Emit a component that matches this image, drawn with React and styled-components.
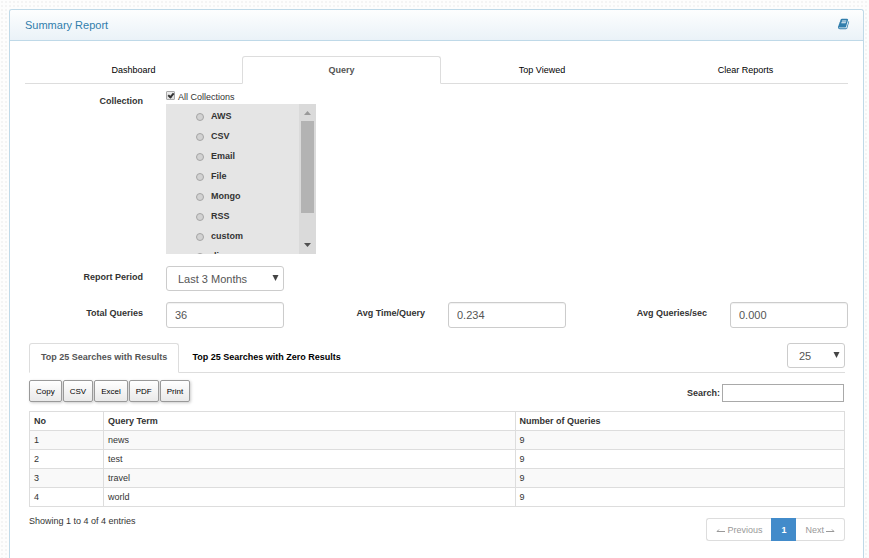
import { useState } from "react";
import styled, { createGlobalStyle } from "styled-components";

const GlobalStyle = createGlobalStyle`
  * {
    box-sizing: border-box;
  }
  body {
    margin: 0;
    font-family: "Liberation Sans", Arial, sans-serif;
    font-size: 9px;
    line-height: 12px;
    color: #333;
    background-color: #fdfdfd;
    background-image: radial-gradient(#f4f4f4 1px, transparent 1px);
    background-size: 4px 4px;
  }
  button, input, select {
    font-family: inherit;
  }
`;

const Page = styled.div`
  padding: 9px 5px 0 9px;
`;

const Panel = styled.section`
  min-height: calc(100vh - 9px);
  background: #fff;
  border: 1px solid #bfd9e8;
  border-bottom: none;
  border-radius: 3px 3px 0 0;
`;

const PanelHeader = styled.header`
  display: flex;
  justify-content: space-between;
  align-items: center;
  height: 31px;
  padding: 0 13px 0 15px;
  border-bottom: 1px solid #bfd9e8;
  border-radius: 3px 3px 0 0;
  background: linear-gradient(#fdfefe, #eaf2f8);
`;

const PanelTitle = styled.h1`
  margin: 0;
  font-size: 11px;
  font-weight: normal;
  color: #317eac;
`;

const HelpLink = styled.a`
  display: flex;
  padding-bottom: 2px;
  color: #317eac;
`;

const PanelBody = styled.div`
  padding: 15px;
`;

const Tabs = styled.div`
  display: flex;
  border-bottom: 1px solid #ddd;
`;

const Tab = styled.button`
  flex: ${({ $grow }) => $grow} 1 0;
  height: 28px;
  margin-bottom: -1px;
  padding: 0;
  border: 1px solid ${({ $active }) => ($active ? "#ddd" : "transparent")};
  border-bottom-color: ${({ $active }) => ($active ? "#fff" : "#ddd")};
  border-radius: 3px 3px 0 0;
  background: ${({ $active }) => ($active ? "#fff" : "none")};
  color: ${({ $active }) => ($active ? "#555" : "#000")};
  font-size: 9px;
  font-weight: ${({ $active }) => ($active ? "bold" : "normal")};
  cursor: pointer;
`;

const FormGrid = styled.div`
  display: grid;
  grid-template-columns: repeat(6, 1fr);
  column-gap: 23px;
  row-gap: 11px;
  padding-top: 6px;
`;

const Label = styled.label`
  grid-column-start: ${({ $first }) => ($first ? 1 : "auto")};
  padding-top: 5px;
  text-align: right;
  font-weight: bold;
`;

const CollectionCell = styled.div`
  grid-column: 2 / -1;
`;

const CheckLabel = styled.label`
  display: flex;
  align-items: center;
  gap: 3px;
  height: 14px;
  padding-bottom: 1px;
`;

const Check = styled.input`
  appearance: none;
  display: flex;
  justify-content: center;
  width: 9px;
  height: 9px;
  margin: 0 0 2px;
  border: 1px solid #aaa;
  border-radius: 1px;
  background: linear-gradient(#eee, #ddd);

  &:checked::after {
    content: "";
    box-sizing: border-box;
    width: 4px;
    height: 6px;
    border: solid #333;
    border-width: 0 2px 2px 0;
    transform: rotate(40deg);
  }
`;

const CollectionBox = styled.div`
  display: flex;
  width: 150px;
  height: 150px;
  margin-bottom: 1px;
  background: #e5e5e5;
`;

const CollectionList = styled.ul`
  flex: 1;
  margin: 0;
  padding: 2px 0 0 30px;
  list-style: none;
  overflow-y: auto;
  scrollbar-width: none;
`;

const CollectionItem = styled.label`
  display: flex;
  align-items: center;
  gap: 7px;
  height: 20px;
  font-weight: bold;
`;

const Radio = styled.input`
  appearance: none;
  width: 8px;
  height: 8px;
  margin: 2px 0 0;
  border: 1px solid #a5a5a5;
  border-radius: 50%;
  background: #d2d2d2;
`;

const ScrollTrack = styled.div`
  display: flex;
  flex-direction: column;
  align-items: center;
  width: 17px;
  background: #dadada;
`;

const ScrollArrow = styled.svg`
  width: 17px;
  height: 17px;
  flex: none;
`;

const ScrollThumb = styled.div`
  width: 13px;
  height: 92px;
  margin-bottom: auto;
  background: #b3b3b3;
`;

const SelectWrap = styled.div`
  position: relative;
  width: ${({ $width }) => $width || "100%"};
`;

const Select = styled.select`
  appearance: none;
  display: block;
  width: 100%;
  height: 25px;
  padding: 0 11px;
  border: 1px solid #ccc;
  border-radius: 3px;
  background: #fff;
  color: #555;
  font-size: 11px;
`;

const SelectArrow = styled.svg`
  position: absolute;
  top: 9px;
  right: 5px;
  pointer-events: none;
`;

const TextBox = styled.input`
  width: 100%;
  min-width: 0;
  height: 26px;
  padding: 0 8px;
  border: 1px solid #ccc;
  border-radius: 3px;
  box-shadow: inset 0 1px 1px rgba(0, 0, 0, 0.06);
  background: #fff;
  color: #555;
  font-size: 11px;
`;

const Results = styled.div`
  padding: 15px 3px 0 4px;
`;

const ResultTabs = styled.div`
  display: flex;
  border-bottom: 1px solid #ddd;
`;

const ResultTab = styled.button`
  height: 30px;
  margin: 0 1px -1px 0;
  padding: 0 11px 2px;
  border: 1px solid ${({ $active }) => ($active ? "#ddd" : "transparent")};
  border-bottom-color: ${({ $active }) => ($active ? "#fff" : "#ddd")};
  border-radius: 3px 3px 0 0;
  background: ${({ $active }) => ($active ? "#fff" : "none")};
  color: ${({ $active }) => ($active ? "#555" : "#000")};
  font-size: 9px;
  font-weight: bold;
  cursor: pointer;
`;

const PageSize = styled.div`
  margin-left: auto;
`;

const Toolbar = styled.div`
  display: flex;
  justify-content: space-between;
  align-items: flex-end;
  height: 29px;
`;

const Buttons = styled.div`
  display: flex;
  gap: 1px;
`;

const ExportButton = styled.button`
  height: 22px;
  padding: 0 6px;
  border: 1px solid #999;
  border-radius: 2px;
  background: linear-gradient(#fff, #e9e9e9);
  box-shadow: 1px 1px 3px #ccc;
  color: #000;
  font-size: 8px;
`;

const SearchLabel = styled.label`
  display: flex;
  align-items: center;
  gap: 2px;
  font-weight: bold;
`;

const SearchBox = styled.input`
  width: 122px;
  height: 18px;
  margin-right: 1px;
  border: 1px solid #a9a9a9;
  background: #fff;
`;

const Table = styled.table`
  width: 100%;
  margin-top: 9px;
  table-layout: fixed;
  border-collapse: collapse;

  th,
  td {
    height: 19px;
    padding: 0 4px;
    border: 1px solid #ddd;
    text-align: left;
  }
  th:nth-child(1) {
    width: 74px;
  }
  th:nth-child(2) {
    width: 50.5%;
  }
  tbody tr:nth-child(odd) {
    background: #f9f9f9;
  }
`;

const TableFooter = styled.div`
  display: flex;
  justify-content: space-between;
  padding-top: 8px;
`;

const Pagination = styled.nav`
  display: flex;
  margin-top: 3px;
`;

const PageLink = styled.a`
  display: flex;
  align-items: center;
  gap: 2px;
  height: 23px;
  padding: 0 9px;
  border: 1px solid ${({ $active }) => ($active ? "#428bca" : "#ddd")};
  background: ${({ $active }) => ($active ? "#428bca" : "#fff")};
  color: ${({ $active }) => ($active ? "#fff" : "#999")};
  font-weight: ${({ $active }) => ($active ? "bold" : "normal")};
  text-decoration: none;

  &:first-child {
    border-right: none;
    border-radius: 3px 0 0 3px;
  }
  &:last-child {
    border-left: none;
    border-radius: 0 3px 3px 0;
  }
`;

const tabs = [
  { name: "Dashboard", grow: 217 },
  { name: "Query", grow: 199 },
  { name: "Top Viewed", grow: 202 },
  { name: "Clear Reports", grow: 205 },
];

const resultTabs = ["Top 25 Searches with Results", "Top 25 Searches with Zero Results"];

const collections = ["AWS", "CSV", "Email", "File", "Mongo", "RSS", "custom", "disc"];

const stats = [
  { id: "total", label: "Total Queries", value: "36" },
  { id: "time", label: "Avg Time/Query", value: "0.234" },
  { id: "rate", label: "Avg Queries/sec", value: "0.000" },
];

const rows = [
  { term: "news", count: 9 },
  { term: "test", count: 9 },
  { term: "travel", count: 9 },
  { term: "world", count: 9 },
];

const BookIcon = () => (
  <svg width="12" height="12" viewBox="0 0 1792 1792" fill="currentColor">
    <path d="M1639 478q40 57 18 129l-275 906q-19 64-76.5 107.5t-122.5 43.5h-923q-77 0-148.5-53.5t-99.5-131.5q-24-67-2-127 0-4 3-27t4-37q1-8-3-21.5t-3-19.5q2-11 8-21t16.5-23.5 16.5-23.5q23-38 45-91.5t30-91.5q3-10 .5-30t-.5-28q3-11 17-28t17-23q21-36 42-92t25-90q1-9-2.5-32t.5-28q4-13 22-30.5t22-22.5q19-26 42.5-84.5t27.5-96.5q1-8-3-25.5t-2-26.5q2-8 9-18t18-23 17-21q8-12 16.5-30.5t15-35 16-36 19.5-32 26.5-23.5 36-11.5 47.5 5.5l-1 3q38-9 51-9h761q74 0 114 56t18 130l-274 906q-36 119-71.5 153.5t-128.5 34.5h-869q-27 0-38 15-11 16-1 43 24 70 144 70h923q29 0 56-15.5t35-41.5l300-987q7-22 5-57 38 15 59 43zm-1064 2q-4 13 2 22.5t20 9.5h608q13 0 25.5-9.5t16.5-22.5l21-64q4-13-2-22.5t-20-9.5h-608q-13 0-25.5 9.5t-16.5 22.5zm-83 256q-4 13 2 22.5t20 9.5h608q13 0 25.5-9.5t16.5-22.5l21-64q4-13-2-22.5t-20-9.5h-608q-13 0-25.5 9.5t-16.5 22.5z" />
  </svg>
);

const DropDown = ({ width, options, ...rest }) => (
  <SelectWrap $width={width}>
    <Select {...rest}>
      {options.map((option) => (
        <option key={option}>{option}</option>
      ))}
    </Select>
    <SelectArrow width="7" height="6" viewBox="0 0 7 6">
      <path d="M0.500 0h6L3.500 6z" fill="#444" />
    </SelectArrow>
  </SelectWrap>
);

const App = () => {
  const [tab, setTab] = useState("Query");
  const [resultTab, setResultTab] = useState(resultTabs[0]);

  return (
    <Page>
      <GlobalStyle />
      <Panel>
        <PanelHeader>
          <PanelTitle>Summary Report</PanelTitle>
          <HelpLink href="#help" aria-label="Help">
            <BookIcon />
          </HelpLink>
        </PanelHeader>
        <PanelBody>
          <Tabs>
            {tabs.map(({ name, grow }) => (
              <Tab key={name} $grow={grow} $active={name === tab} onClick={() => setTab(name)}>
                {name}
              </Tab>
            ))}
          </Tabs>

          <FormGrid>
            <Label as="div" $first>Collection</Label>
            <CollectionCell>
              <CheckLabel>
                <Check type="checkbox" defaultChecked />
                All Collections
              </CheckLabel>
              <CollectionBox>
                <CollectionList>
                  {collections.map((name) => (
                    <li key={name}>
                      <CollectionItem>
                        <Radio type="radio" name="collection" disabled />
                        {name}
                      </CollectionItem>
                    </li>
                  ))}
                </CollectionList>
                <ScrollTrack>
                  <ScrollArrow viewBox="0 0 17 17">
                    <path d="M5 11h7L8.500 7z" fill="#999" />
                  </ScrollArrow>
                  <ScrollThumb />
                  <ScrollArrow viewBox="0 0 17 17">
                    <path d="M5 6h7l-3.500 4z" fill="#505050" />
                  </ScrollArrow>
                </ScrollTrack>
              </CollectionBox>
            </CollectionCell>

            <Label htmlFor="period" $first>Report Period</Label>
            <DropDown id="period" options={["Last 3 Months", "Last Month", "Last Week"]} />

            {stats.map(({ id, label, value }, i) => [
              <Label key={id + "-label"} htmlFor={id} $first={i === 0}>{label}</Label>,
              <TextBox key={id} id={id} defaultValue={value} />,
            ])}
          </FormGrid>

          <Results>
            <ResultTabs>
              {resultTabs.map((name) => (
                <ResultTab key={name} $active={name === resultTab} onClick={() => setResultTab(name)}>
                  {name}
                </ResultTab>
              ))}
              <PageSize>
                <DropDown width="58px" aria-label="Rows" options={["25", "50", "100"]} />
              </PageSize>
            </ResultTabs>

            <Toolbar>
              <Buttons>
                {["Copy", "CSV", "Excel", "PDF", "Print"].map((name) => (
                  <ExportButton key={name}>{name}</ExportButton>
                ))}
              </Buttons>
              <SearchLabel>
                Search:
                <SearchBox type="search" />
              </SearchLabel>
            </Toolbar>

            <Table>
              <thead>
                <tr>
                  <th>No</th>
                  <th>Query Term</th>
                  <th>Number of Queries</th>
                </tr>
              </thead>
              <tbody>
                {rows.map(({ term, count }, i) => (
                  <tr key={term}>
                    <td>{i + 1}</td>
                    <td>{term}</td>
                    <td>{count}</td>
                  </tr>
                ))}
              </tbody>
            </Table>

            <TableFooter>
              <span>Showing 1 to 4 of 4 entries</span>
              <Pagination>
                <PageLink href="#prev">
                  <svg width="9" height="8" viewBox="0 0 9 8" fill="none" stroke="currentColor">
                    <path d="M3 3.500L1 5.500h8" />
                  </svg>
                  Previous
                </PageLink>
                <PageLink href="#1" $active>1</PageLink>
                <PageLink href="#next">
                  Next
                  <svg width="9" height="8" viewBox="0 0 9 8" fill="none" stroke="currentColor">
                    <path d="M6 3.500L8 5.500H0" />
                  </svg>
                </PageLink>
              </Pagination>
            </TableFooter>
          </Results>
        </PanelBody>
      </Panel>
    </Page>
  );
};

export default App;
